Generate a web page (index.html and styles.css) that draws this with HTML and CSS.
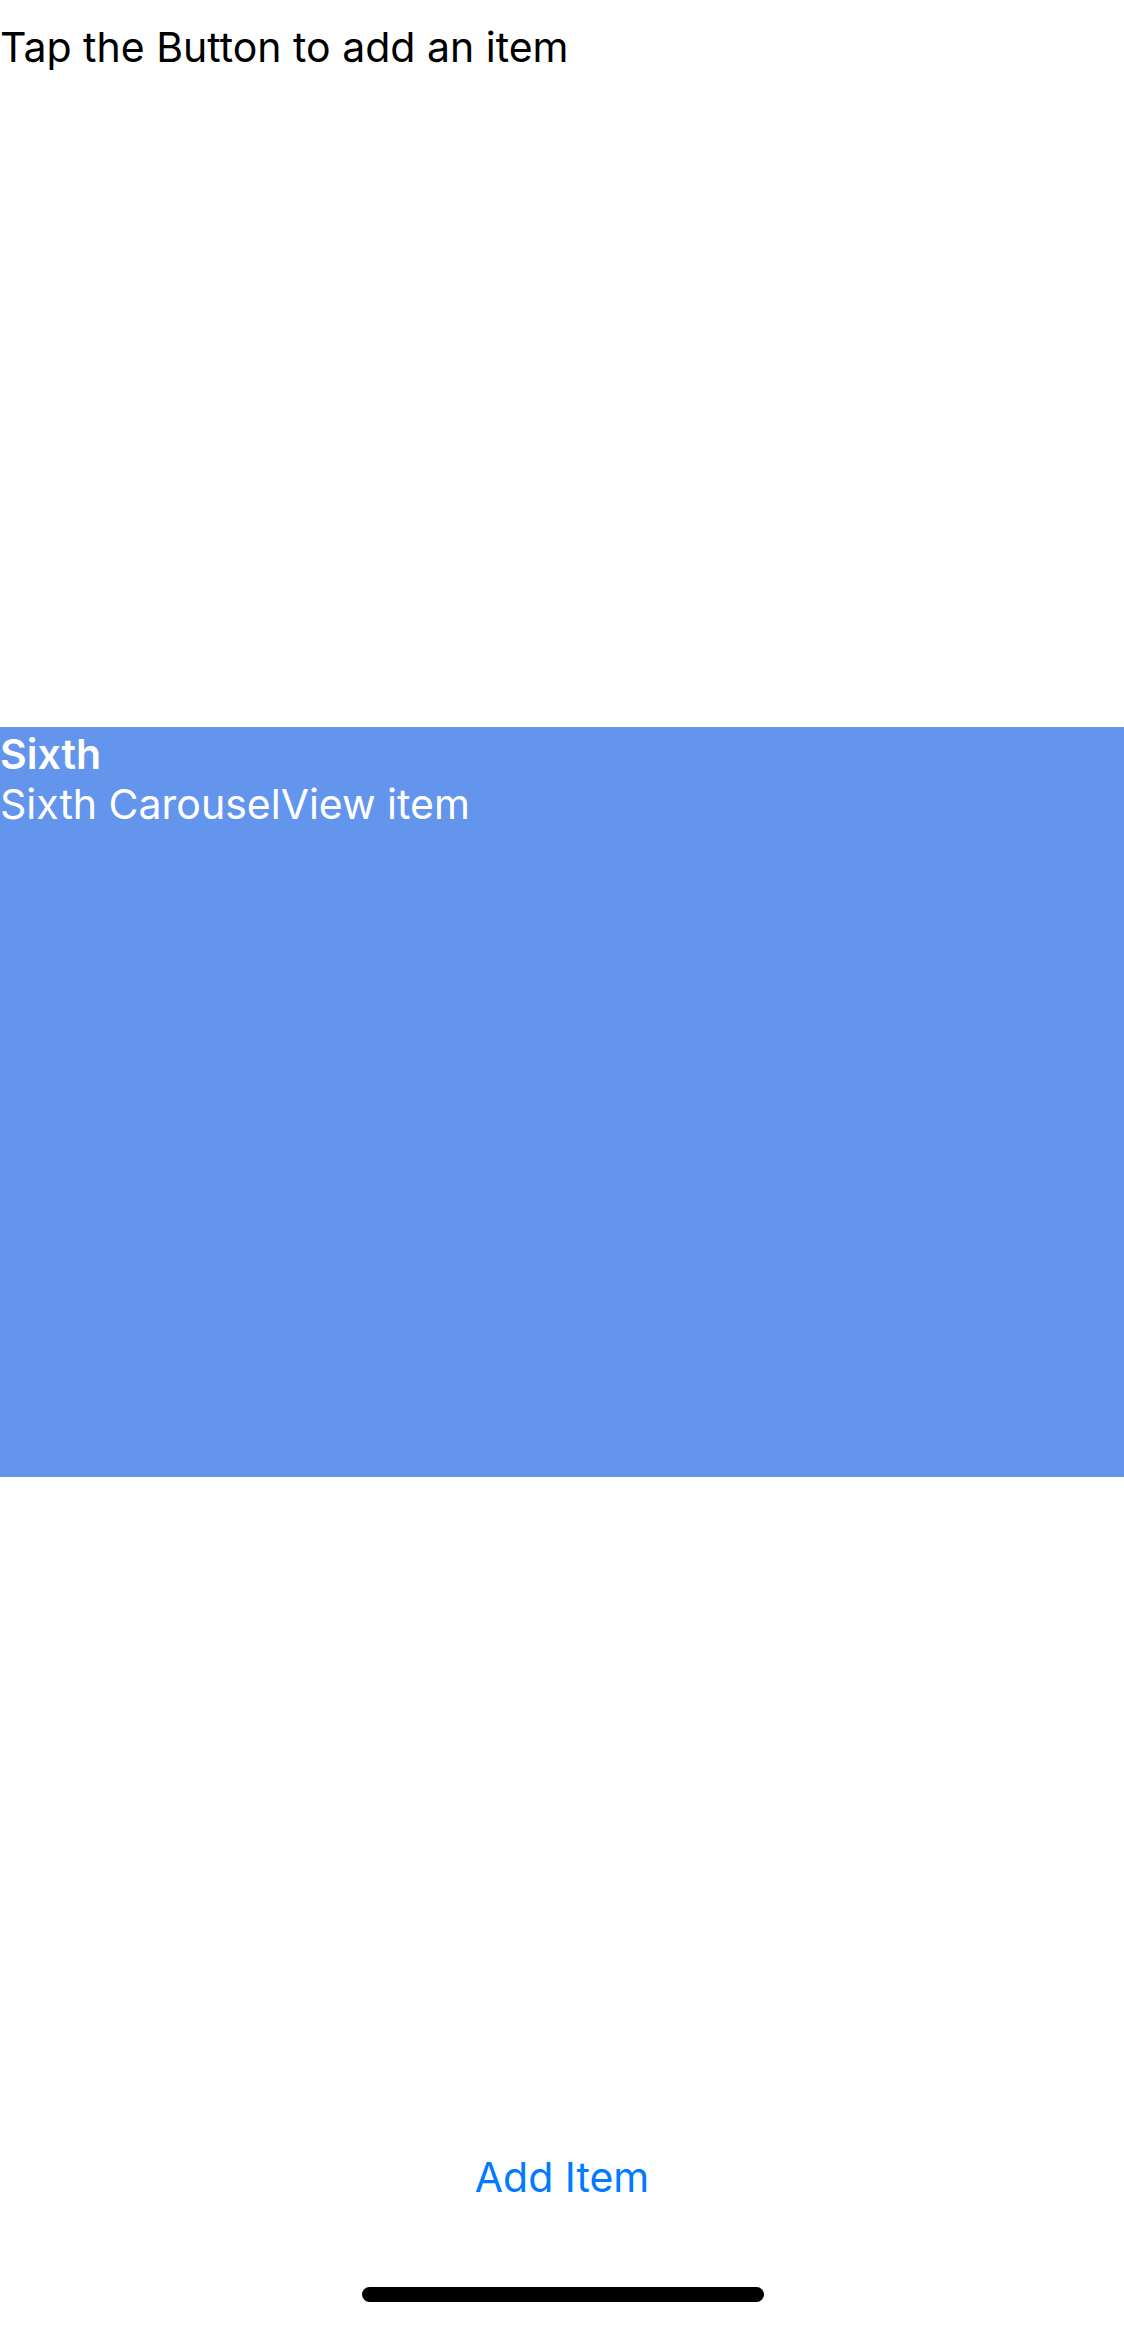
FILE: index.html
```html
<!DOCTYPE html>
<html>
<head>
<meta charset="utf-8">
<link rel="stylesheet" href="styles.css">
</head>
<body>
<div class="screen">
  <div class="prompt">Tap the Button to add an item</div>
  <div class="carousel">
    <div class="item">
      <div class="item-title">Sixth</div>
      <div class="item-desc">Sixth CarouselView item</div>
    </div>
  </div>
  <div class="actions">
    <button class="add-btn">Add Item</button>
  </div>
  <div class="home-indicator"></div>
</div>
</body>
</html>
```
FILE: styles.css
```css
html, body {
  margin: 0;
  padding: 0;
  background: #ffffff;
}
.screen {
  position: relative;
  width: 1124px;
  height: 2326px;
  display: flex;
  flex-direction: column;
  font-family: Inter, "Noto Sans", sans-serif;
  overflow: hidden;
}
.prompt {
  font-size: 41px;
  line-height: 50px;
  color: #000;
  padding-top: 22px;
  height: 727px;
  box-sizing: border-box;
  flex-shrink: 0;
}
.carousel {
  height: 750px;
  background: #6495ed;
  flex-shrink: 0;
}
.item {
  color: #fff;
  padding-top: 2px;
}
.item-title {
  font-size: 41px;
  font-weight: 600;
  line-height: 50px;
}
.item-desc {
  font-size: 41px;
  line-height: 50px;
}
.actions {
  display: flex;
  justify-content: center;
  padding-top: 675px;
}
.add-btn {
  border: none;
  background: none;
  padding: 0;
  font-family: inherit;
  font-size: 41px;
  line-height: 50px;
  color: #007aff;
}
.home-indicator {
  position: absolute;
  left: 362px;
  top: 2287px;
  width: 402px;
  height: 15px;
  border-radius: 8px;
  background: #000;
}
```
